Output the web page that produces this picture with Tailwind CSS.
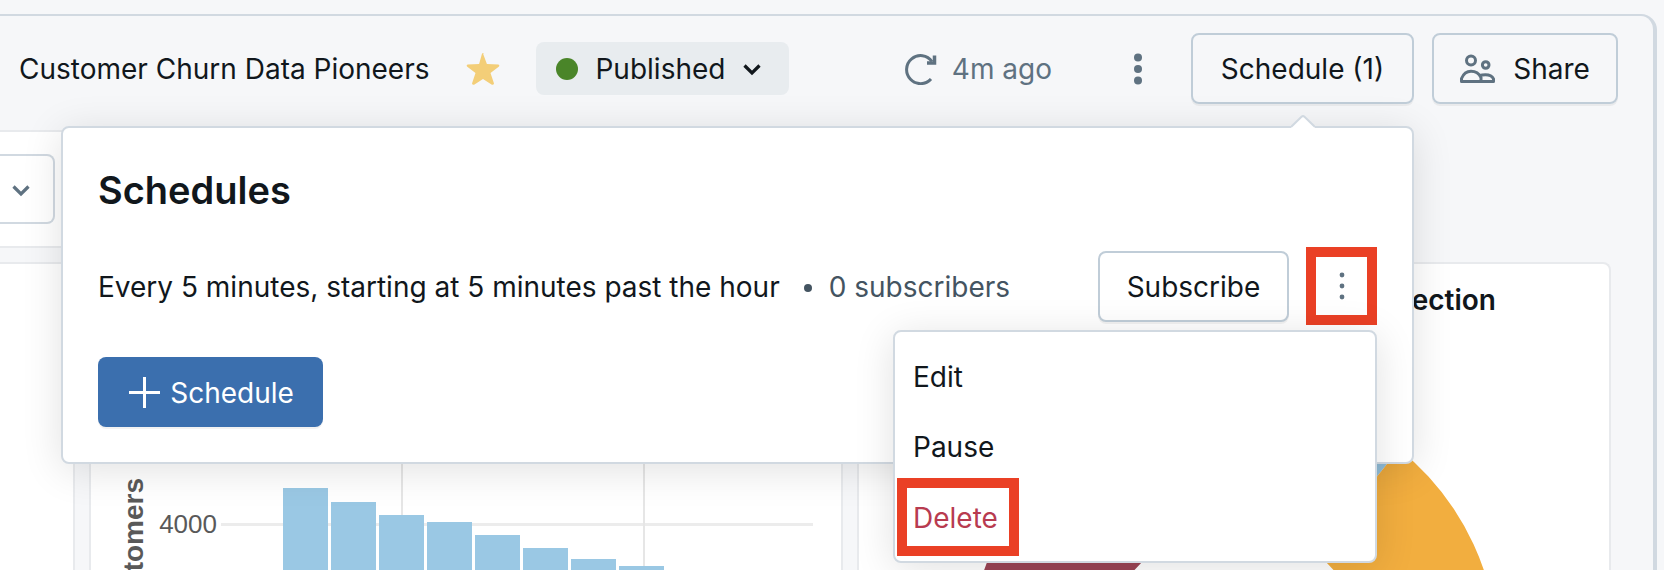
<!DOCTYPE html>
<html lang="en">
<head>
<meta charset="utf-8">
<meta name="viewport" content="width=device-width, initial-scale=1">
<title>Customer Churn Data Pioneers</title>
<script src="https://cdn.jsdelivr.net/npm/@tailwindcss/browser@4"></script>
</head>
<body class="flex h-screen flex-col overflow-hidden bg-[#f6f7f9] pt-[14px] pr-[7px] font-['Inter',sans-serif] text-[28px] leading-9 text-[#11171c]">
<div class="flex min-h-0 flex-1 flex-col rounded-tr-[16px] border-t-2 border-r-4 border-[#d1d9e1]">

  <header class="flex h-[114px] shrink-0 items-start pt-[17px] pr-[35px] pl-[19px]">
    <div class="flex h-[71px] flex-1 items-center">
      <h1 class="whitespace-nowrap">Customer Churn Data Pioneers</h1>
      <button type="button" aria-label="Favorite" class="ml-[37px]">
        <svg class="block size-[34px]" viewBox="0 0 34 34"><path d="M17 1.500 L20.900 12 L32.500 12.500 Q34 13.300 33 14.500 L24.500 21 L28 31.500 Q27.500 33.500 25.500 32.500 L17 27 L8.500 32.500 Q6.500 33.500 6 31.500 L9.500 21 L1 14.500 Q0 13.300 1.500 12.500 L13.100 12 L15.900 2 Q17 0 18.100 2 Z" fill="#f3ce78"/></svg>
      </button>
      <button type="button" class="ml-9 flex h-[53px] items-center rounded-lg bg-[#e8ecef] pr-[28px] pl-5">
        <span class="size-[22px] rounded-full bg-[#4a8529]"></span>
        <span class="ml-[17px]">Published</span>
        <svg class="mt-0.5 ml-[18px] h-3 w-[18px]" viewBox="0 0 18 12" fill="none" stroke="#11171c" stroke-width="3.200"><path d="M1.500 1.500 L9 9 L16.500 1.500"/></svg>
      </button>
      <button type="button" class="mr-[66px] ml-auto flex items-center gap-[15px] text-[#5f7281]">
        <svg class="size-8" viewBox="0 0 32 32" fill="none" stroke="#5f7281" stroke-width="3"><path d="M26 26 A14 14 0 1 1 27 8.500"/><path d="M29.500 2.500 V10 H22" stroke-width="3.500"/></svg>
        <span>4m ago</span>
      </button>
      <button type="button" aria-label="More options" class="mr-[33px] flex w-[40px] justify-center">
        <svg class="h-8 w-2" viewBox="0 0 8 32" fill="#5f7281"><circle cx="4" cy="4.500" r="4"/><circle cx="4" cy="16" r="4"/><circle cx="4" cy="27.500" r="4"/></svg>
      </button>
    </div>

    <div class="relative z-10">
      <button type="button" aria-expanded="true" class="flex h-[71px] w-[223px] items-center justify-center rounded-lg border-2 border-[#c0cdd8] shadow-[0_2px_0_rgba(0,0,0,0.05)]">Schedule (1)</button>

      <section aria-labelledby="schedules-title" class="absolute top-[93px] right-0 w-[1353px] rounded-lg border-2 border-[#d1d9e1] bg-white px-[35px] pt-9 pb-[35px] shadow-[0_6px_40px_rgba(0,0,0,0.12)]">
        <svg class="absolute -top-[13px] right-[97px] h-[13px] w-6" viewBox="0 0 24 13"><path d="M0 13 L0 12 L10.500 1.500 Q12 0.500 13.500 1.500 L24 12 V13 Z" fill="#fff"/><path d="M0 12 L10.500 1.700 Q12 0.500 13.500 1.700 L24 12" fill="none" stroke="#d1d9e1" stroke-width="2"/></svg>
        <h2 id="schedules-title" class="text-[38px] leading-[52px] font-semibold">Schedules</h2>
        <div class="mt-[31px] flex h-[78px] items-center">
          <p class="pt-0.5 whitespace-nowrap">Every 5 minutes, starting at 5 minutes past the hour</p>
          <span class="mt-1 mr-[17px] ml-6 size-2 rounded-full bg-[#445461]"></span>
          <p class="pt-0.5 whitespace-nowrap text-[#445461]">0 subscribers</p>
          <button type="button" class="ml-auto flex h-[71px] w-[191px] items-center justify-center rounded-lg border-2 border-[#c0cdd8] bg-white pt-0.5 shadow-[0_2px_0_rgba(0,0,0,0.05)]">Subscribe</button>
          <div class="relative ml-[17px]">
            <button type="button" aria-label="Schedule actions" aria-expanded="true" class="flex h-[78px] w-[71px] items-center justify-center border-[10px] border-[#ea4025]">
              <svg class="h-7 w-[6px]" viewBox="0 0 6 28" fill="#5f7281"><circle cx="3" cy="3" r="2.400"/><circle cx="3" cy="14" r="2.400"/><circle cx="3" cy="25" r="2.400"/></svg>
            </button>
            <div role="menu" class="absolute top-[83px] right-0 w-[484px] rounded-lg border-2 border-[#d1d9e1] bg-white pt-[10px] pb-[9px] shadow-[0_6px_40px_rgba(0,0,0,0.12)]">
              <button type="button" role="menuitem" class="flex h-[70px] w-full items-center px-[18px]">Edit</button>
              <button type="button" role="menuitem" class="flex h-[70px] w-full items-center px-[18px]">Pause</button>
              <button type="button" role="menuitem" class="relative flex h-[70px] w-full items-center px-[18px] pt-0.5 text-[#b83b50]">Delete<span class="absolute -top-1 left-0.5 h-[78px] w-[122px] border-[10px] border-[#ea4025]"></span></button>
            </div>
          </div>
        </div>
        <button type="button" class="mt-8 flex h-[70px] w-[225px] items-center justify-center gap-[10px] rounded-lg bg-[#3b6fae] pl-0.5 text-white shadow-[0_2px_0_rgba(0,0,0,0.05)]">
          <svg class="size-[31px]" viewBox="0 0 31 31" stroke="#fff" stroke-width="3"><path d="M15.500 0 V31 M0 15.500 H31"/></svg>
          <span class="pt-0.5">Schedule</span>
        </button>
      </section>
    </div>

    <button type="button" class="ml-[18px] flex h-[71px] w-[186px] items-center justify-center gap-[18px] rounded-lg border-2 border-[#c0cdd8] shadow-[0_2px_0_rgba(0,0,0,0.05)]">
      <svg class="h-[30px] w-[35px]" viewBox="0 0 35 30" fill="none" stroke="#5f7281" stroke-width="3"><circle cx="11" cy="6.500" r="4.500"/><circle cx="25.700" cy="11" r="3.300"/><path d="M1.500 27.500 V24.500 Q4.500 17.200 11 17.200 Q18 17.200 21 23.500 V27.500 Z" stroke-linejoin="round"/><path d="M19.500 21.700 Q22 20.700 25.500 20.700 Q31.500 20.700 33.500 24.800 V27.500 H21" stroke-linejoin="round"/></svg>
      Share
    </button>
  </header>

  <main class="flex min-h-0 flex-1 flex-col">
    <div class="flex h-[118px] w-1/2 shrink-0 items-center border-y-2 border-[#e8eaed] bg-white">
      <button type="button" aria-label="Filter value" class="flex h-[70px] w-[55px] items-center rounded-r-lg border-2 border-l-0 border-[#d1d9e1] pl-3">
        <svg class="mt-1 h-3 w-[18px]" viewBox="0 0 18 12" fill="none" stroke="#5f7281" stroke-width="3.200"><path d="M1.500 1.500 L9 9 L16.500 1.500"/></svg>
      </button>
    </div>
    <div class="mt-[14px] flex min-h-0 flex-1 gap-[14px] overflow-hidden pr-[42px]">
      <section class="w-[75px] shrink-0 rounded-tr-lg border-t-2 border-r-2 border-[#e8eaed] bg-white"></section>

      <section class="min-w-0 flex-1 overflow-hidden rounded-t-lg border-2 border-b-0 border-[#e8eaed] bg-white">
        <svg class="block h-[306px] w-[750px] font-['Liberation_Sans',sans-serif]" viewBox="91 264 750 306" role="img" aria-label="Customers histogram" fill="#595959">
          <path d="M221 524.500 H813" stroke="#ececec" stroke-width="3"/>
          <path d="M402 280 V570 M644 280 V570" stroke="#e6e6e6" stroke-width="2"/>
          <g fill="#9ac8e4">
            <path d="M283 488h45v82h-45z M331 502h45v68h-45z M379 515h45v55h-45z M427 522h45v48h-45z M475 535h45v35h-45z M523 548h45v22h-45z M571 559h45v11h-45z M619 566h45v4h-45z"/>
          </g>
          <text x="217" y="533" text-anchor="end" font-size="26">4000</text>
          <text transform="translate(143 478) rotate(-90)" text-anchor="end" font-size="28" font-weight="700">Customers</text>
        </svg>
      </section>

      <section class="min-w-0 flex-1 overflow-hidden rounded-t-lg border-2 border-b-0 border-[#e8eaed] bg-white">
        <h3 class="pt-[18px] pr-[113px] text-right font-semibold">Connection</h3>
        <svg class="mx-auto mt-[73px] block size-[528px]" viewBox="-264 -264 528 528" role="img" aria-label="Churn by connection">
          <path d="M-165 -206 A264 264 0 0 1 165 -206 L82 -102 A131 131 0 0 0 -82 -102 Z" fill="#97c5e0"/>
          <path d="M165 -206 A264 264 0 0 1 0 264 V131 A131 131 0 0 0 82 -102 Z" fill="#f2ae3f"/>
          <path d="M0 264 A264 264 0 0 1 -165 -206 L-82 -102 A131 131 0 0 0 0 131 Z" fill="#9b4556"/>
        </svg>
      </section>
    </div>
  </main>
</div>
</body>
</html>
